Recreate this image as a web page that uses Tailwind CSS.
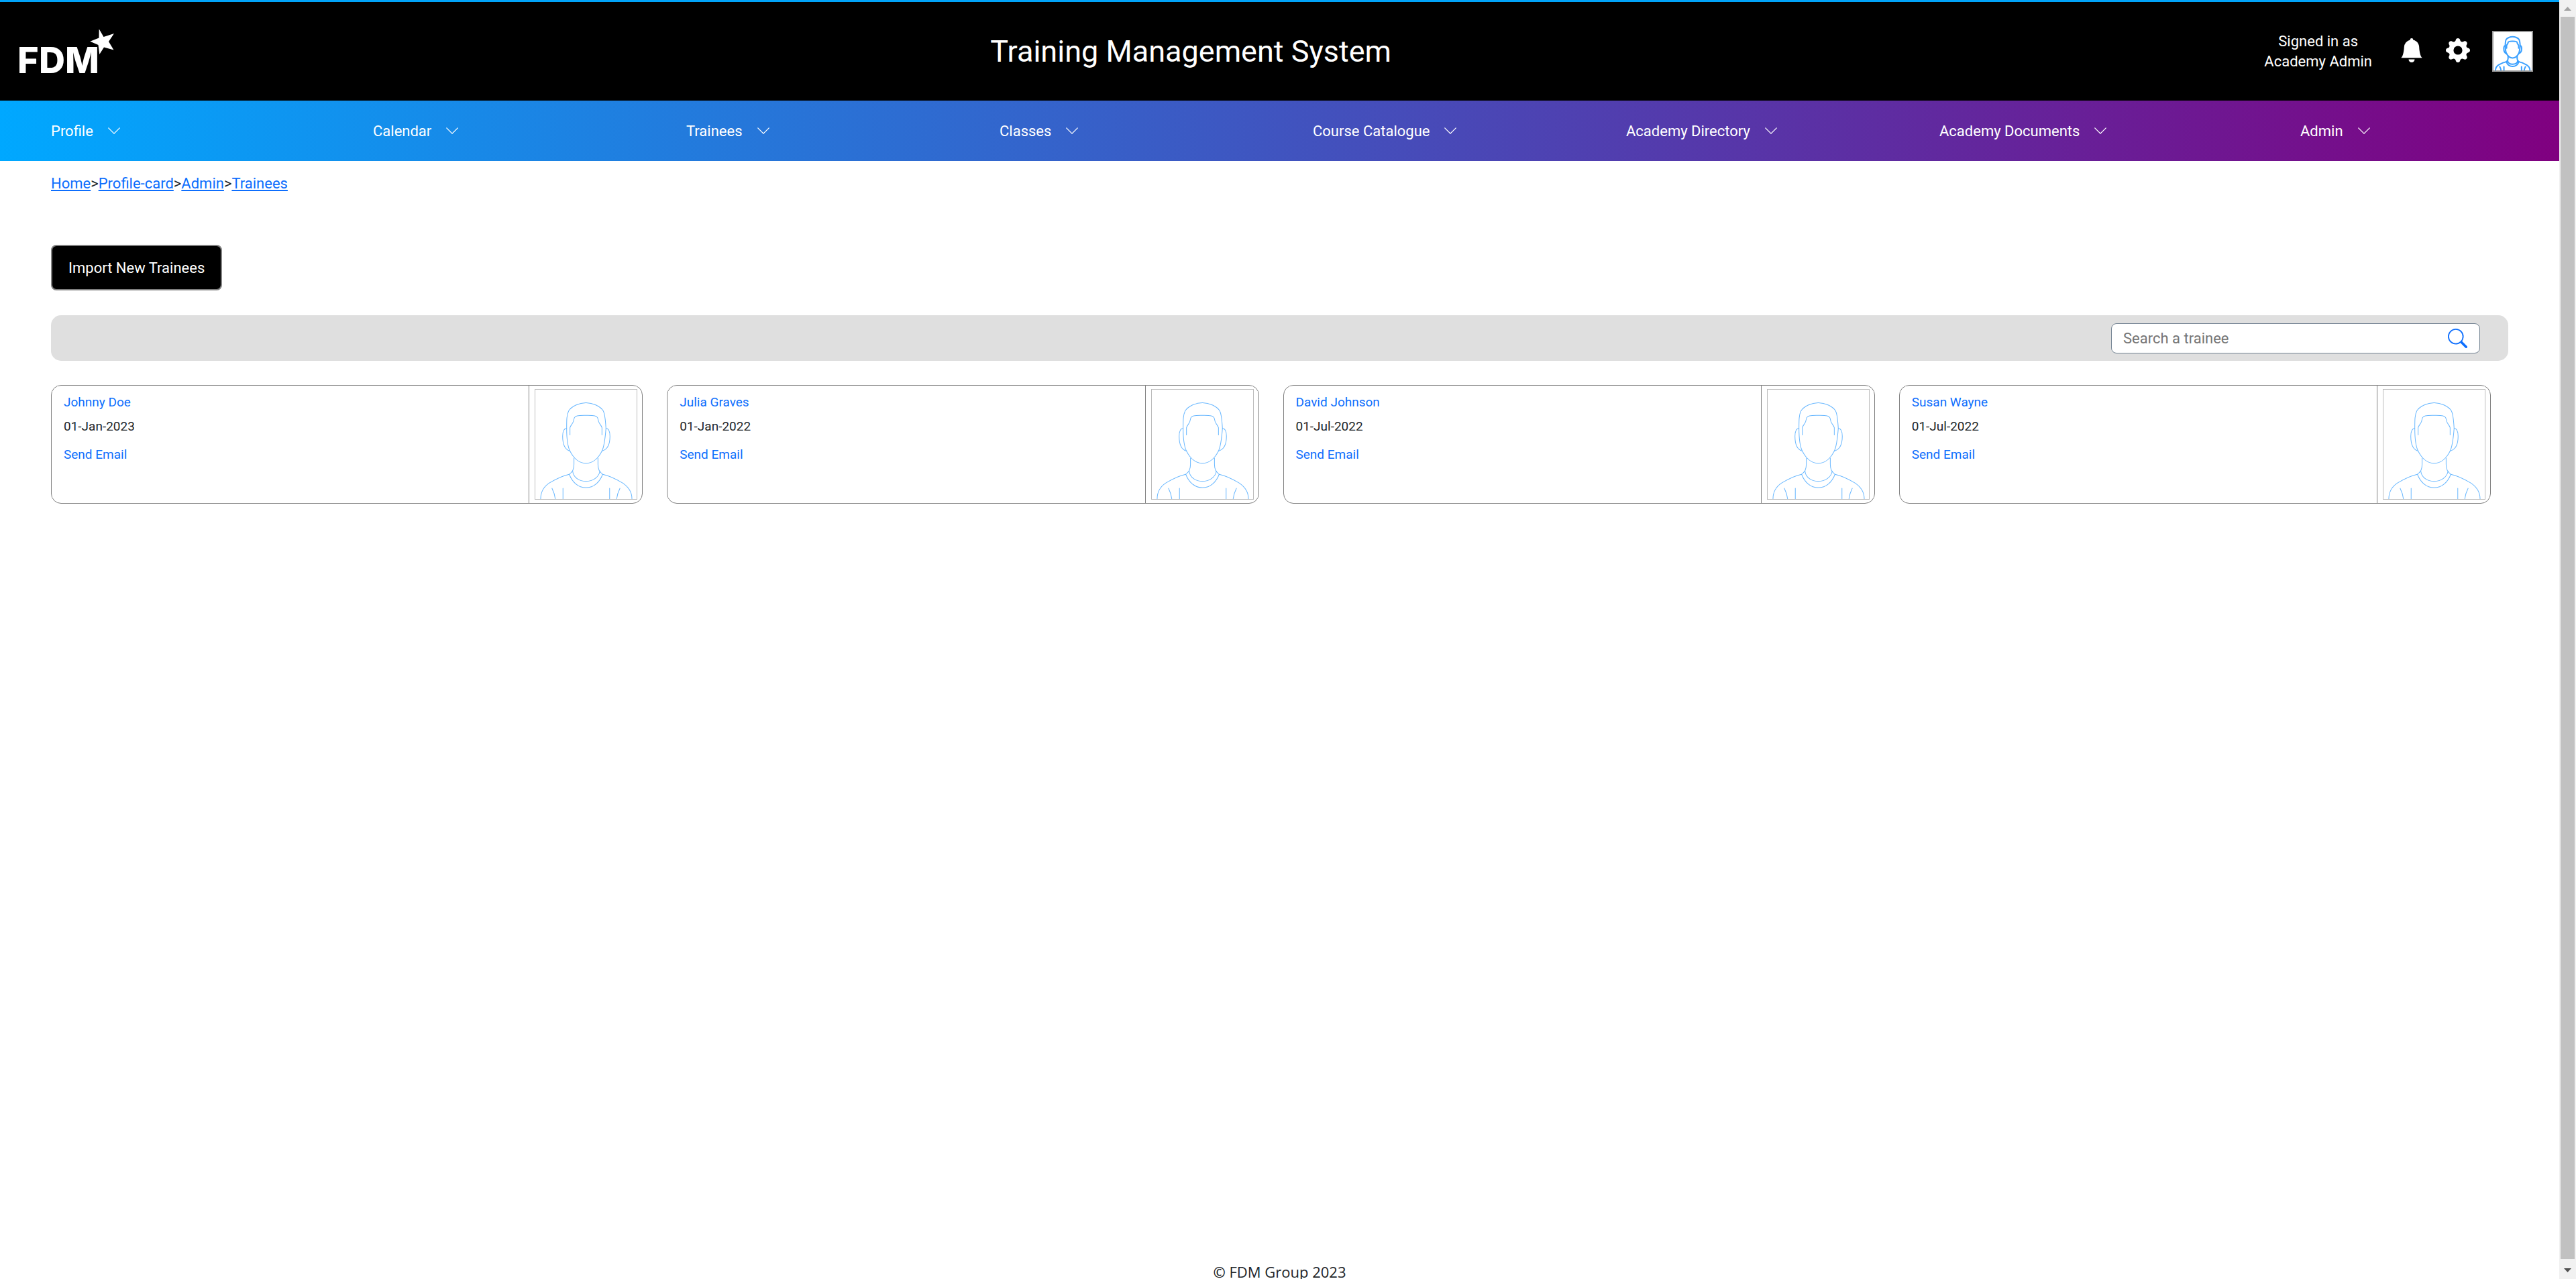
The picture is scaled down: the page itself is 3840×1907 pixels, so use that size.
<!DOCTYPE html>
<html lang="en">
<head>
<meta charset="utf-8">
<title>Training Management System</title>
<script src="https://cdn.jsdelivr.net/npm/@tailwindcss/browser@4"></script>
</head>
<body class="flex h-screen overflow-hidden bg-white font-['Roboto',sans-serif] text-[#212529]">
<svg class="hidden" aria-hidden="true">
  <symbol id="chevron" viewBox="0 0 16 16"><path fill="currentColor" d="M1.646 4.646a.5.5 0 0 1 .708 0L8 10.293l5.646-5.647a.5.5 0 0 1 .708.708l-6 6a.5.5 0 0 1-.708 0l-6-6a.5.5 0 0 1 0-.708z"/></symbol>
  <symbol id="person" viewBox="0 0 152 164" preserveAspectRatio="none">
    <g fill="none" stroke="currentColor" stroke-linejoin="round" stroke-linecap="round">
      <path vector-effect="non-scaling-stroke" d="M47 58C47 45 47 38 50 32C54 25 66 19.500 76 19.500S98 25 102 32C105 38 105 45 106 58M47 58C47 71 48 84 52 92C58 104 67 110.500 76 110.500S94 104 100 92C104 84 105 71 106 58"/>
      <path vector-effect="non-scaling-stroke" d="M52 68V57C54 51 57 52 58 44C59 38 66 38.500 76 38.500S93 38 94 44C95 52 98 51 100 57V68"/>
      <path vector-effect="non-scaling-stroke" d="M47 58C43 58 41 63 41 70C41 83 44 90 52 92M106 58C110 58 112 63 112 70C112 83 108 90 100 92"/>
      <path vector-effect="non-scaling-stroke" d="M58 103V112C58 122 54 124 51 127M94 103V112C94 122 98 124 101 127"/>
      <path vector-effect="non-scaling-stroke" d="M56 122C57 132 66 137.500 76 137.500S95 132 97 122M51 127C55 138 64 147 76 147S97 138 101 127"/>
      <path vector-effect="non-scaling-stroke" d="M51 127C41 129 31 134 21 140C12 146 8 154 8 164M101 127C111 129 121 134 131 140C140 146 145 154 145 164"/>
      <path vector-effect="non-scaling-stroke" d="M25 148Q29 156 30 164M41.500 148V164M111.500 148V164M127 148Q123 156 122 164"/>
    </g>
  </symbol>
</svg>
<div class="flex min-w-0 flex-1 flex-col">
  <header class="flex h-[150px] shrink-0 items-center justify-between border-t-3 border-[#00a3f9] bg-black pr-[39px] pl-5 text-white">
    <a href="#" aria-label="FDM home" class="pb-[3px]">
      <svg class="h-20 w-[155px] overflow-visible font-['Inter',sans-serif] text-[54px] font-extrabold" viewBox="0 0 155 80" fill="#fff">
        <text x="6" y="74">F</text><text x="38" y="74">D</text><text x="77" y="74">M</text>
        <path d="M127.700 8.300L134.500 20L150 15L142 27L149.500 39.500L135 35.500L128.300 46L126.500 32L114.300 26.700L127.500 21.500Z"/>
      </svg>
    </a>
    <h1 class="text-[45px]">Training Management System</h1>
    <div class="flex items-center gap-[33px]">
      <p class="mr-2 text-center text-[22px] leading-[30px]">Signed in as<br>Academy Admin</p>
      <button aria-label="Notifications" class="pb-[3px]"><svg class="size-9" viewBox="0 0 16 16" fill="currentColor"><path d="M8 16a2 2 0 0 0 2-2H6a2 2 0 0 0 2 2zm.995-14.901a1 1 0 1 0-1.990 0A5.002 5.002 0 0 0 3 6c0 1.098-.5 6-2 7h14c-1.500-1-2-5.902-2-7 0-2.420-1.720-4.440-4.005-4.901z"/></svg></button>
      <button aria-label="Settings" class="pb-[3px]"><svg class="size-9" viewBox="0 0 16 16" fill="currentColor"><path d="M9.405 1.050c-.413-1.400-2.397-1.400-2.810 0l-.1.340a1.464 1.464 0 0 1-2.105.872l-.310-.170c-1.283-.698-2.686.705-1.987 1.987l.169.311c.446.820.023 1.841-.872 2.105l-.340.100c-1.400.413-1.400 2.397 0 2.810l.340.100a1.464 1.464 0 0 1 .872 2.105l-.170.310c-.698 1.283.705 2.686 1.987 1.987l.311-.169a1.464 1.464 0 0 1 2.105.872l.1.340c.413 1.400 2.397 1.400 2.810 0l.1-.340a1.464 1.464 0 0 1 2.105-.872l.310.170c1.283.698 2.686-.705 1.987-1.987l-.169-.311a1.464 1.464 0 0 1 .872-2.105l.340-.1c1.400-.413 1.400-2.397 0-2.810l-.340-.1a1.464 1.464 0 0 1-.872-2.105l.170-.310c.698-1.283-.705-2.686-1.987-1.987l-.311.169a1.464 1.464 0 0 1-2.105-.872l-.1-.340zM8 10.930a2.929 2.929 0 1 1 0-5.860 2.929 2.929 0 0 1 0 5.858z"/></svg></button>
      <svg class="size-[61px] border-2 border-[#999] bg-white stroke-2 text-[#3aa0ff]"><use href="#person" width="57" height="57"/></svg>
    </div>
  </header>
  <nav class="grid h-[90px] shrink-0 grid-cols-[480fr_repeat(6,467fr)_457fr] items-center bg-linear-to-r/srgb from-[#00a8ff] to-[#800080] pl-[76px] text-[22px] text-white">
    <a href="#" class="flex items-center gap-5">Profile <svg class="size-[22px]"><use href="#chevron"/></svg></a>
    <a href="#" class="flex items-center gap-5">Calendar <svg class="size-[22px]"><use href="#chevron"/></svg></a>
    <a href="#" class="flex items-center gap-5">Trainees <svg class="size-[22px]"><use href="#chevron"/></svg></a>
    <a href="#" class="flex items-center gap-5">Classes <svg class="size-[22px]"><use href="#chevron"/></svg></a>
    <a href="#" class="flex items-center gap-5">Course Catalogue <svg class="size-[22px]"><use href="#chevron"/></svg></a>
    <a href="#" class="flex items-center gap-5">Academy Directory <svg class="size-[22px]"><use href="#chevron"/></svg></a>
    <a href="#" class="flex items-center gap-5">Academy Documents <svg class="size-[22px]"><use href="#chevron"/></svg></a>
    <a href="#" class="flex items-center gap-5 pl-[71px]">Admin <svg class="size-[22px]"><use href="#chevron"/></svg></a>
  </nav>
  <main class="flex flex-1 flex-col items-start px-[76px] pt-[17px]">
    <p class="text-[22px] leading-[33px]"><a href="#" class="text-[#0d6efd] underline">Home</a>&gt;<a href="#" class="text-[#0d6efd] underline">Profile-card</a>&gt;<a href="#" class="text-[#0d6efd] underline">Admin</a>&gt;<a href="#" class="text-[#0d6efd] underline">Trainees</a></p>
    <button class="mt-[75px] h-[68px] rounded-lg border-2 border-[#808080] bg-black px-6 text-[22px] text-white">Import New Trainees</button>
    <form class="mt-[37px] flex h-[68px] w-full items-center justify-end rounded-[15px] bg-[#dfdfdf] pr-[42px]">
      <div class="flex h-[45px] w-[550px] items-center rounded-lg border border-[#708090] bg-white pr-[18px] pl-[17px]">
        <input type="search" aria-label="Search a trainee" placeholder="Search a trainee" class="min-w-0 flex-1 text-[22px] outline-none placeholder:text-[#757575]">
        <button aria-label="Search" class="text-[#0d6efd]"><svg class="size-[29px]" viewBox="0 0 16 16" fill="currentColor"><path d="M11.742 10.344a6.500 6.500 0 1 0-1.397 1.398h-.001c.030.040.062.078.098.115l3.850 3.850a1 1 0 0 0 1.415-1.414l-3.850-3.850a1.007 1.007 0 0 0-.115-.100zM12 6.500a5.500 5.500 0 1 1-11 0 5.500 5.500 0 0 1 11 0z"/></svg></button>
      </div>
    </form>
    <div class="mt-9 grid w-full grid-cols-4 gap-9 pr-[26px] text-[19px] leading-[27px]">
      <article class="flex h-[177px] rounded-[15px] border border-[#808080]">
        <div class="flex flex-1 flex-col items-start pt-[11px] pl-[18px]"><a href="#" class="text-[#0d6efd]">Johnny Doe</a><p class="mt-[9px] mb-[15px]">01-Jan-2023</p><a href="#" class="text-[#0d6efd]">Send Email</a></div>
        <div class="flex items-center justify-center border-l border-[#808080] pr-[7px] pl-2"><svg class="h-[165px] w-[153px] border border-[#bbb] text-[#6ab8ff]"><use href="#person"/></svg></div>
      </article>
      <article class="flex h-[177px] rounded-[15px] border border-[#808080]">
        <div class="flex flex-1 flex-col items-start pt-[11px] pl-[18px]"><a href="#" class="text-[#0d6efd]">Julia Graves</a><p class="mt-[9px] mb-[15px]">01-Jan-2022</p><a href="#" class="text-[#0d6efd]">Send Email</a></div>
        <div class="flex items-center justify-center border-l border-[#808080] pr-[7px] pl-2"><svg class="h-[165px] w-[153px] border border-[#bbb] text-[#6ab8ff]"><use href="#person"/></svg></div>
      </article>
      <article class="flex h-[177px] rounded-[15px] border border-[#808080]">
        <div class="flex flex-1 flex-col items-start pt-[11px] pl-[18px]"><a href="#" class="text-[#0d6efd]">David Johnson</a><p class="mt-[9px] mb-[15px]">01-Jul-2022</p><a href="#" class="text-[#0d6efd]">Send Email</a></div>
        <div class="flex items-center justify-center border-l border-[#808080] pr-[7px] pl-2"><svg class="h-[165px] w-[153px] border border-[#bbb] text-[#6ab8ff]"><use href="#person"/></svg></div>
      </article>
      <article class="flex h-[177px] rounded-[15px] border border-[#808080]">
        <div class="flex flex-1 flex-col items-start pt-[11px] pl-[18px]"><a href="#" class="text-[#0d6efd]">Susan Wayne</a><p class="mt-[9px] mb-[15px]">01-Jul-2022</p><a href="#" class="text-[#0d6efd]">Send Email</a></div>
        <div class="flex items-center justify-center border-l border-[#808080] pr-[7px] pl-2"><svg class="h-[165px] w-[153px] border border-[#bbb] text-[#6ab8ff]"><use href="#person"/></svg></div>
      </article>
    </div>
  </main>
  <footer class="h-[27px] shrink-0 text-center font-['Open_Sans',sans-serif] text-[22px] leading-[33px]"><span class="font-semibold">©</span> FDM Group 2023</footer>
</div>
<div class="flex w-[25px] shrink-0 flex-col items-center bg-[#f1f1f1]" aria-hidden="true">
  <svg class="h-[25px] w-[25px] shrink-0" viewBox="0 0 25 25"><path fill="#a3a3a3" d="M7 16h11l-5.500-6z"/></svg>
  <div class="mb-[5px] w-[21px] flex-1 bg-[#c1c1c1]"></div>
  <svg class="h-[25px] w-[25px] shrink-0" viewBox="0 0 25 25"><path fill="#505050" d="M7 9h11l-5.500 6z"/></svg>
</div>
</body>
</html>
